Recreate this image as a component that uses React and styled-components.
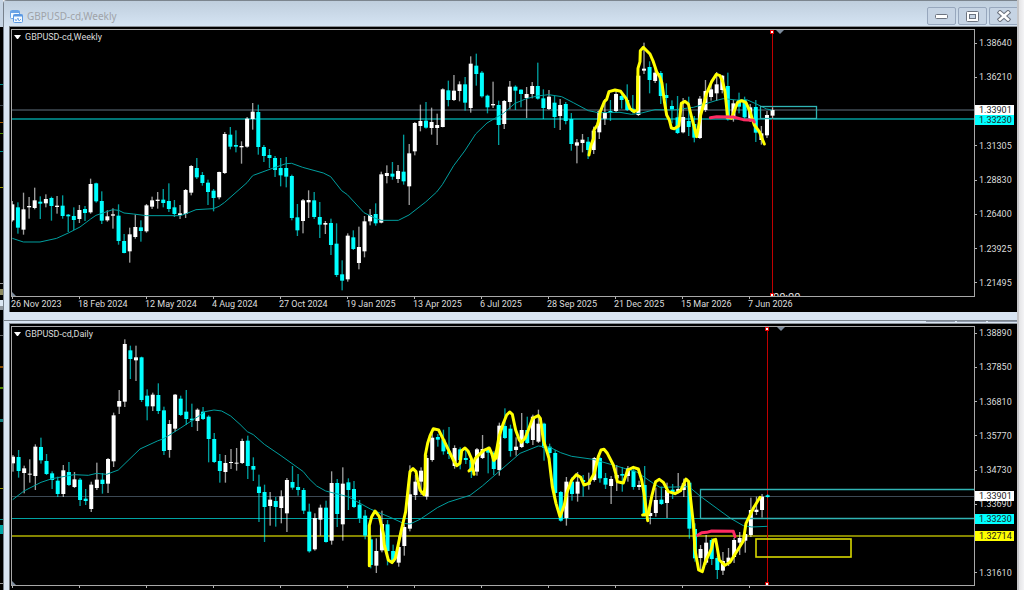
import React from 'react';
import styled, {createGlobalStyle} from 'styled-components';

const GlobalStyle = createGlobalStyle`
  * {
    box-sizing: border-box;
  }
  body {
    margin: 0;
    overflow: hidden;
    background: #ececee;
  }
`;

const chartFont = 'Roboto, "Liberation Sans", sans-serif';

const Workspace = styled.main`
  display: grid;
  grid-template-columns: 3px 1fr 7px;
  height: 100vh;
  overflow: hidden;
  font-family: ${chartFont};
  font-size: 9px;
  line-height: 10px;
`;

const Rail = styled.svg`
  display: block;
  width: 3px;
  height: 590px;
  background: #000;
`;

const Gutter = styled.div`
  border-left: 2px solid #c6c6c8;
  background: linear-gradient(90deg, #e4e4e6, #f4f4f6);
`;

const Windows = styled.div`
  min-width: 0;
`;

const Window = styled.section`
  padding: 0 0 ${({$last}) => ($last ? 0 : 8)}px 5px;
  border-top: 1px solid #7c858e;
  border-left: 1px solid #77818c;
  border-top-left-radius: ${({$last}) => ($last ? 0 : 4)}px;
  background: #d9e5f2;
`;

const TitleBar = styled.header`
  display: flex;
  align-items: center;
  justify-content: space-between;
  height: 25px;
  margin-left: -5px;
  padding: 5px 0 0 6px;
  background: linear-gradient(#bfcedd, #d5e4f3);
`;

const Caption = styled.h1`
  display: flex;
  align-items: center;
  gap: 4px;
  margin: 0;
  color: #9fa3a8;
  font: 400 10px/16px "Noto Sans", "Open Sans", sans-serif;
`;

const Controls = styled.div`
  display: flex;
  gap: 2px;
`;

const ControlButton = styled.button`
  display: flex;
  align-items: center;
  justify-content: center;
  width: ${({$edge}) => ($edge ? 28 : 29)}px;
  height: 18px;
  padding: 0;
  border: 1px solid #97a7bd;
  border-right-width: ${({$edge}) => ($edge ? 0 : 1)}px;
  border-radius: ${({$edge}) => ($edge ? '2px 0 0 2px' : '2px')};
  background: #c6d4e4;
`;

const HiddenBar = styled.div`
  display: flex;
  justify-content: flex-end;
  gap: 2px;
  height: 2px;
`;

const BarEdge = styled.span`
  width: 29px;
  height: 1px;
  background: #8d97a8;
`;

const ChartBox = styled.div`
  display: grid;
  grid-template-columns: 1fr 42px;
  padding: 2px 0 0 1px;
  border-top: 1px solid #8b9197;
  border-left: 1px solid #70767c;
  background: #000;
  color: #dcdcdc;
`;

const Plot = styled.div`
  position: relative;
  min-width: 0;
  height: ${({$height}) => $height + 2}px;
  border: 1px solid #a8a8a8;
`;

const Legend = styled.h2`
  display: flex;
  align-items: center;
  gap: 4px;
  position: absolute;
  top: 2px;
  left: 2px;
  margin: 0;
  font-size: 9px;
  font-weight: 400;
`;

const Canvas = styled.svg`
  display: block;
  width: 100%;
  height: 100%;
  overflow: hidden;
`;

const PriceAxis = styled.div`
  position: relative;
`;

const PriceList = styled.ol`
  display: flex;
  flex-direction: column;
  justify-content: space-between;
  height: 250px;
  margin: 0;
  padding: ${({$top}) => $top}px 0 0;
  box-sizing: content-box;
  list-style: none;
`;

const Price = styled.li`
  display: flex;
  align-items: center;
  gap: 2px;
  height: 10px;
  &::before {
    content: '';
    width: 2px;
    height: 1px;
    background: #b4b4b4;
  }
`;

const PriceTag = styled.span`
  position: absolute;
  top: ${({$top}) => $top}px;
  left: 0;
  width: 39px;
  height: 10px;
  padding-left: 4px;
  background: ${({$color}) => $color};
  color: #202020;
`;

const TimeAxis = styled.ol`
  display: flex;
  grid-column: 1 / -1;
  height: 15px;
  margin: 0;
  padding: 0;
  list-style: none;
  overflow: hidden;
`;

const TimeLabel = styled.li`
  flex: 0 0 67px;
  white-space: nowrap;
  &::before {
    content: '';
    display: block;
    width: 1px;
    height: 2px;
    margin-left: 1px;
    background: #b4b4b4;
  }
`;

// One candle: [rising, high, bodyTop, bodyBottom, low].
// Drawing data is kept in thirds of a pixel, y measured from the workspace top.
const STEP = 16.77;

const weekly = [
    [1, 603, 613, 661, 665], [0, 607, 622, 683, 701], [1, 578, 628, 689, 704], [1, 591, 618, 622, 656],
    [1, 563, 601, 624, 628], [0, 589, 605, 611, 657], [1, 583, 597, 610, 622], [0, 590, 594, 618, 662],
    [1, 588, 617, 621, 641], [0, 586, 617, 648, 656], [0, 642, 644, 649, 696], [0, 622, 648, 660, 690],
    [1, 615, 630, 657, 669], [0, 618, 627, 639, 663], [1, 536, 552, 637, 641], [0, 548, 550, 604, 608],
    [0, 574, 603, 662, 672], [1, 631, 649, 661, 665], [1, 625, 643, 647, 686], [0, 613, 647, 723, 734],
    [0, 702, 723, 759, 760], [1, 683, 703, 754, 788], [1, 644, 681, 711, 716], [0, 661, 682, 693, 725],
    [1, 612, 616, 694, 698], [1, 590, 601, 620, 627], [1, 576, 599, 603, 626], [0, 567, 599, 609, 622],
    [0, 550, 603, 627, 636], [0, 600, 622, 642, 651], [1, 615, 640, 645, 657], [1, 567, 570, 642, 654],
    [1, 495, 498, 578, 586], [0, 474, 504, 532, 537], [0, 516, 525, 549, 557], [0, 539, 548, 576, 615],
    [0, 567, 572, 594, 634], [1, 515, 516, 592, 598], [1, 396, 402, 519, 522], [0, 381, 404, 440, 448],
    [0, 391, 435, 440, 457], [1, 424, 438, 442, 491], [1, 351, 356, 440, 443], [1, 309, 335, 357, 389],
    [0, 314, 336, 441, 464], [0, 435, 441, 468, 486], [0, 447, 465, 474, 504], [0, 468, 474, 510, 531],
    [0, 474, 504, 526, 559], [0, 471, 504, 530, 562], [0, 524, 528, 654, 661], [0, 612, 652, 691, 708],
    [1, 597, 601, 663, 700], [1, 571, 600, 607, 654], [0, 576, 601, 651, 657], [0, 606, 651, 674, 714],
    [1, 663, 669, 674, 702], [0, 656, 669, 735, 765], [0, 670, 731, 825, 831], [0, 781, 823, 842, 871],
    [1, 700, 707, 838, 845], [0, 691, 712, 747, 750], [1, 680, 741, 789, 808], [1, 648, 664, 754, 772],
    [1, 627, 645, 664, 676], [0, 610, 642, 670, 677], [1, 515, 523, 668, 670], [1, 496, 519, 528, 550],
    [0, 486, 521, 530, 539], [1, 495, 513, 537, 549], [0, 404, 515, 544, 554], [1, 432, 460, 559, 615],
    [1, 366, 369, 454, 466], [1, 314, 363, 378, 394], [0, 306, 362, 383, 386], [1, 323, 366, 384, 404],
    [1, 341, 375, 384, 435], [1, 265, 268, 381, 382], [0, 242, 271, 300, 319], [1, 225, 272, 300, 303],
    [1, 244, 253, 273, 304], [0, 231, 253, 308, 332], [1, 169, 191, 324, 338], [0, 161, 197, 222, 257],
    [0, 213, 218, 289, 293], [0, 284, 287, 322, 340], [1, 245, 312, 316, 324], [0, 302, 315, 375, 435],
    [1, 300, 303, 372, 387], [1, 243, 260, 306, 328], [0, 256, 260, 272, 330], [0, 268, 269, 282, 322],
    [1, 261, 282, 294, 354], [1, 246, 258, 282, 295], [0, 188, 258, 296, 299], [0, 268, 295, 324, 357],
    [1, 270, 290, 327, 330], [0, 288, 308, 351, 384], [1, 297, 315, 348, 390], [0, 306, 312, 363, 373],
    [0, 339, 357, 432, 452], [1, 417, 427, 437, 490], [1, 402, 419, 429, 457], [0, 411, 425, 450, 477],
    [1, 380, 392, 450, 462], [1, 330, 334, 397, 417], [1, 297, 337, 356, 375], [0, 300, 333, 338, 363],
    [1, 270, 282, 333, 337], [0, 276, 288, 300, 326], [0, 253, 300, 330, 333], [0, 285, 326, 336, 340],
    [1, 220, 227, 345, 348], [1, 128, 206, 212, 222], [0, 184, 201, 240, 280], [1, 200, 218, 243, 249],
    [0, 213, 219, 288, 312], [0, 250, 285, 294, 330], [0, 301, 318, 329, 370], [0, 288, 352, 399, 402],
    [1, 294, 351, 397, 400], [0, 290, 363, 381, 408], [0, 348, 372, 413, 427], [1, 288, 296, 414, 417],
    [1, 240, 273, 330, 336], [1, 255, 268, 291, 302], [1, 216, 253, 280, 303], [1, 225, 227, 270, 280],
    [0, 218, 258, 358, 362], [1, 300, 310, 350, 365], [0, 278, 300, 320, 340], [0, 290, 300, 352, 356],
    [1, 312, 322, 355, 366], [0, 300, 321, 398, 426], [1, 378, 400, 420, 434], [1, 333, 345, 406, 414],
    [1, 322, 330, 347, 354],
];

const daily = [
    [1, 1365, 1370, 1390, 1415], [0, 1350, 1371, 1413, 1433], [1, 1397, 1405, 1419, 1480], [1, 1378, 1421, 1424, 1448],
    [1, 1333, 1340, 1428, 1470], [0, 1313, 1341, 1381, 1391], [0, 1362, 1383, 1422, 1425], [0, 1414, 1420, 1440, 1467],
    [0, 1430, 1442, 1482, 1491], [1, 1395, 1411, 1482, 1491], [0, 1386, 1416, 1455, 1458], [1, 1416, 1438, 1461, 1464],
    [0, 1434, 1439, 1500, 1518], [0, 1467, 1496, 1503, 1515], [1, 1445, 1454, 1527, 1536], [1, 1388, 1439, 1464, 1470],
    [0, 1419, 1439, 1452, 1481], [1, 1374, 1377, 1451, 1479], [1, 1238, 1246, 1384, 1401], [1, 1170, 1203, 1220, 1242],
    [1, 1018, 1032, 1205, 1221], [0, 1037, 1051, 1077, 1137], [1, 1037, 1072, 1081, 1143], [0, 1070, 1072, 1200, 1206],
    [0, 1168, 1187, 1219, 1261], [1, 1178, 1184, 1219, 1233], [0, 1150, 1185, 1233, 1242], [0, 1220, 1231, 1353, 1365],
    [1, 1260, 1272, 1350, 1373], [1, 1182, 1184, 1286, 1295], [0, 1187, 1196, 1245, 1248], [0, 1170, 1235, 1257, 1275],
    [0, 1211, 1256, 1261, 1281], [1, 1225, 1229, 1263, 1293], [0, 1221, 1235, 1257, 1260], [0, 1246, 1250, 1317, 1387],
    [0, 1299, 1317, 1386, 1389], [0, 1362, 1383, 1413, 1448], [1, 1365, 1389, 1416, 1448], [1, 1347, 1386, 1389, 1407],
    [1, 1344, 1388, 1391, 1412], [1, 1316, 1323, 1389, 1392], [0, 1307, 1322, 1398, 1437], [0, 1372, 1398, 1409, 1443],
    [0, 1424, 1460, 1479, 1566], [0, 1454, 1476, 1521, 1626], [1, 1476, 1499, 1518, 1577], [0, 1491, 1503, 1521, 1580],
    [1, 1471, 1489, 1524, 1570], [1, 1434, 1440, 1540, 1596], [0, 1398, 1446, 1463, 1469], [0, 1422, 1461, 1470, 1487],
    [0, 1464, 1470, 1532, 1542], [0, 1511, 1535, 1654, 1658], [1, 1540, 1554, 1648, 1652], [1, 1514, 1523, 1559, 1607],
    [0, 1502, 1523, 1626, 1628], [1, 1414, 1449, 1622, 1634], [0, 1437, 1449, 1542, 1581], [1, 1402, 1451, 1573, 1622],
    [0, 1435, 1447, 1470, 1530], [0, 1443, 1467, 1521, 1524], [0, 1500, 1514, 1554, 1569], [0, 1530, 1547, 1607, 1618],
    [0, 1607, 1618, 1695, 1705], [1, 1615, 1653, 1697, 1719], [1, 1532, 1572, 1651, 1657], [0, 1560, 1573, 1653, 1696],
    [0, 1634, 1653, 1685, 1688], [1, 1610, 1641, 1688, 1700], [1, 1573, 1581, 1638, 1667], [1, 1396, 1483, 1586, 1594],
    [1, 1425, 1445, 1485, 1500], [1, 1402, 1412, 1445, 1485], [1, 1365, 1374, 1490, 1499], [1, 1300, 1313, 1380, 1385],
    [0, 1302, 1311, 1319, 1340], [0, 1289, 1318, 1354, 1364], [0, 1281, 1354, 1362, 1377], [1, 1336, 1344, 1398, 1406],
    [0, 1342, 1348, 1380, 1408], [0, 1347, 1374, 1380, 1392], [0, 1374, 1380, 1415, 1434], [1, 1344, 1348, 1415, 1427],
    [1, 1305, 1347, 1374, 1377], [0, 1340, 1347, 1358, 1420], [0, 1354, 1359, 1407, 1425], [1, 1268, 1277, 1410, 1427],
    [0, 1225, 1278, 1314, 1317], [0, 1274, 1286, 1353, 1370], [1, 1312, 1340, 1350, 1367], [1, 1239, 1290, 1341, 1344],
    [0, 1250, 1290, 1329, 1332], [1, 1244, 1250, 1320, 1335], [1, 1229, 1271, 1325, 1329], [0, 1268, 1271, 1343, 1382],
    [0, 1331, 1340, 1359, 1380], [0, 1350, 1359, 1479, 1488], [0, 1473, 1476, 1562, 1565], [1, 1431, 1445, 1554, 1577],
    [0, 1431, 1445, 1482, 1502], [1, 1416, 1445, 1481, 1505], [0, 1425, 1440, 1446, 1490], [1, 1418, 1448, 1454, 1469],
    [1, 1371, 1374, 1440, 1445], [0, 1370, 1374, 1435, 1448], [0, 1419, 1434, 1454, 1467], [1, 1428, 1437, 1458, 1512],
    [1, 1395, 1425, 1435, 1473], [0, 1401, 1422, 1427, 1475], [1, 1398, 1405, 1428, 1445], [0, 1407, 1412, 1461, 1469],
    [1, 1442, 1455, 1461, 1470], [0, 1398, 1455, 1547, 1550], [1, 1500, 1539, 1548, 1573], [1, 1463, 1500, 1539, 1550],
    [0, 1460, 1499, 1512, 1515], [1, 1448, 1470, 1509, 1554], [0, 1452, 1469, 1476, 1497], [1, 1419, 1467, 1473, 1480],
    [1, 1436, 1450, 1470, 1491], [0, 1443, 1448, 1586, 1616], [0, 1570, 1587, 1675, 1685], [1, 1635, 1647, 1674, 1713],
    [1, 1605, 1628, 1688, 1694], [0, 1615, 1620, 1677, 1695], [0, 1668, 1674, 1710, 1737], [1, 1656, 1683, 1712, 1725],
    [1, 1644, 1673, 1687, 1698], [1, 1614, 1620, 1671, 1689], [1, 1596, 1614, 1628, 1665], [1, 1575, 1602, 1622, 1658],
    [1, 1493, 1530, 1605, 1611], [1, 1490, 1529, 1536, 1545], [1, 1482, 1490, 1530, 1553], [0, 1483, 1486, 1491, 1493],
];

const weeklyAverage = '37,715 70,726 120,726 170,715 205,699 240,681 272,657 288,646 338,629 356,631 372,639 400,642 439,647 540,647 556,642 588,629 640,626 657,619 674,607 741,548 757,528 760,526 820,504 858,491 875,490 908,502 970,519 992,530 1025,572 1042,584 1092,638 1126,655 1144,661 1195,661 1227,645 1277,606 1310,576 1327,554 1361,497 1394,453 1427,402 1461,369 1510,340 1545,310 1579,296 1612,288 1646,284 1685,290 1720,308 1765,332 1795,338 1860,337 1895,343 1925,339 1965,329 2020,330 2080,322 2115,312 2150,301 2170,296 2210,300 2240,299 2265,310 2300,327 2316,330';
const dailyAverage = '38,1499 72,1473 123,1447 156,1436 223,1424 265,1426 290,1420 320,1423 355,1410 390,1376 420,1347 472,1323 491,1316 542,1284 592,1251 615,1235 642,1230 665,1233 692,1248 720,1273 742,1295 760,1304 793,1333 843,1367 910,1415 927,1436 950,1458 977,1473 1044,1490 1111,1527 1178,1555 1210,1570 1230,1572 1260,1558 1312,1523 1346,1506 1410,1486 1447,1458 1500,1412 1560,1360 1615,1338 1650,1342 1682,1358 1715,1369 1780,1378 1849,1398 1910,1416 1960,1450 1980,1462 2067,1460 2100,1488 2190,1554 2230,1577 2255,1581 2302,1579';

// freehand marks, each with its own origin
const weeklyInk = [
    {x: 1380, y: 90, points: '387,375 393,345 401,325 402,300 412,285 418,265 420,247 433,215 440,208 447,185 465,180 482,184 498,205 510,236 522,245 532,240 534,115 540,95 541,62 550,52 570,72 580,95 590,125 600,142 606,160 614,220 620,255 628,270 634,294 643,296 657,287 664,220 675,214 685,222 697,270 710,320 722,255 740,190 755,155 769,133 780,137 788,155 795,185 803,262'},
    {x: 2100, y: 0, points: '83,352 95,355 102,335 112,308 125,302 138,308 150,335 163,375 178,395 193,432'},
    {x: 2100, y: 0, color: '#ff2b62', points: '31,353 50,350 100,351 130,359 160,361 163,366'},
];
const dailyInk = [
    {x: 720, y: 1140, points: '388,557 388,437 395,410 405,393 418,410 430,460 433,495 445,540 456,548 466,535 483,455 497,395 505,320 510,275 519,266 528,275 533,300 540,330 552,344 555,320 556,225 563,190 570,168 580,146 596,150 616,190 640,240 650,257 660,250 665,212 675,204 684,213 694,235 702,283'},
    {x: 720, y: 1140, points: '687,273 696,265 700,250 706,235 730,212 748,204 755,220 761,241 770,232 775,195'},
    {x: 1410, y: 1170, points: '71,210 80,180 87,140 100,100 110,75 119,66 127,73 137,120 148,150 154,157 165,145 175,120 188,85 205,77 211,85 220,150 237,205 247,290 258,340 270,380 283,345 290,310 305,270 319,254 332,262 342,285 355,281 373,250 385,200 393,180 402,178 412,190 430,225 437,250 442,275 460,279 473,240 490,232 505,237 515,270 522,310 533,392'},
    {x: 1410, y: 1170, points: '518,375 535,372 545,320 550,300 557,275 568,268 580,277 595,305 615,311 632,302 648,267 656,275 670,400 675,480 686,540 697,545 705,517 725,475 730,450 737,448 742,475 748,510 765,526 780,517 820,453 828,400 850,355 870,322'},
    {x: 1980, y: 1320, color: '#ff2b62', points: '113,286 125,278 140,277 155,273 220,274 225,290'},
];

const charts = {
    weekly: {
        title: 'GBPUSD-cd,Weekly',
        top: 30,
        height: 266,
        start: 37,
        candles: weekly,
        average: weeklyAverage,
        ink: weeklyInk,
        levels: [{y: 79, color: '#30383f', thick: 2}, {y: 88, color: '#007474', thick: 2}],
        cursor: 760,
        marker: 768,
        pricesTop: 9,
        prices: ['1.38640', '1.36210', '', '1.31305', '1.28830', '1.26400', '1.23925', '1.21495'],
        tags: [['1.33901', '#fff', 76], ['1.33230', '#0ff', 86]],
        times: ['26 Nov 2023', '18 Feb 2024', '12 May 2024', '4 Aug 2024', '27 Oct 2024', '19 Jan 2025',
            '13 Apr 2025', '6 Jul 2025', '28 Sep 2025', '21 Dec 2025', '15 Mar 2026', '7 Jun 2026'],
    },
    daily: {
        title: 'GBPUSD-cd,Daily',
        top: 327,
        height: 258,
        start: 39,
        candles: daily,
        average: dailyAverage,
        ink: dailyInk,
        levels: [{y: 169, color: '#3c4954', thick: 1}, {y: 191, color: '#00a3a3', thick: 1}, {y: 208, color: '#858500', thick: 2}],
        cursor: 755,
        marker: 769,
        pricesTop: 2,
        prices: ['1.38890', '1.37850', '1.36810', '1.35770', '1.34730', '1.33690', '', '1.31610'],
        tags: [['1.33901', '#fff', 165], ['1.33230', '#0ff', 188], ['1.32714', '#ff0', 205]],
        times: ['', '', '', '', '', '', '', '', '', '', '', ''],
    },
};

const Candle = ({x, data: [rising, high, top, bottom, low]}) => (
    <g fill={rising ? '#fff' : '#0ff'}>
        <rect x={x - 2} y={high} width="4" height={low - high} opacity="0.62"/>
        <rect x={x - 6} y={top} width="12" height={Math.max(bottom - top, 3)}/>
    </g>
);

const Handle = ({x, y}) => (
    <g>
        <rect x={x - 2} y={y - 2} width="4" height="4" fill="#e00000"/>
        <rect x={x - 1} y={y - 1} width="2" height="2" fill="#fff"/>
    </g>
);

const Chart = ({chart, children}) => (
    <ChartBox>
        <Plot $height={chart.height}>
            <Canvas role="img" aria-label={`${chart.title} candlestick chart`}>
                {chart.levels.map(({y, color, thick}) => (
                    <rect key={y} x="0" y={y} width="100%" height={thick} fill={color}/>
                ))}
                <rect x={chart.cursor} y="0" width="1" height={chart.height} fill="#c00000"/>
                <g transform={`translate(-12 ${-chart.top}) scale(0.33333)`}>
                    {chart.candles.map((data, i) => (
                        <Candle key={i} x={chart.start + i * STEP} data={data}/>
                    ))}
                    <polyline points={chart.average} fill="none" stroke="#00a0a0" strokeWidth="3"/>
                </g>
                {children}
                <g transform={`translate(-12 ${-chart.top}) scale(0.33333)`}>
                    {chart.ink.map(({x, y, points, color = '#ff0'}) => (
                        <polyline
                            key={points}
                            transform={`translate(${x} ${y})`}
                            points={points}
                            fill="none"
                            stroke={color}
                            strokeWidth="9"
                            strokeLinecap="round"
                            strokeLinejoin="round"
                        />
                    ))}
                </g>
                <Handle x={chart.cursor} y={2}/>
                <Handle x={chart.cursor} y={chart.height - 1}/>
                <path d={`M${chart.marker - 4} 0h8l-4 4z`} fill="#7c8b9c"/>
                <path d={`M0 ${chart.height - 4}l4 4h-4z`} fill="#7c8b9c"/>
            </Canvas>
            <Legend>
                <svg width="7" height="4" aria-hidden="true"><path d="M0 0h7l-3 4h-1z" fill="#fff"/></svg>
                {chart.title}
            </Legend>
        </Plot>
        <PriceAxis>
            <PriceList $top={chart.pricesTop}>
                {chart.prices.map((price, i) => <Price key={i}>{price}</Price>)}
            </PriceList>
            {chart.tags.map(([price, color, top]) => (
                <PriceTag key={price} $color={color} $top={top}>{price}</PriceTag>
            ))}
        </PriceAxis>
        <TimeAxis>
            {chart.times.map((time, i) => <TimeLabel key={i}>{time}</TimeLabel>)}
        </TimeAxis>
    </ChartBox>
);

const ChartIcon = () => (
    <svg width="13" height="13" viewBox="0 0 13 13" aria-hidden="true">
        <rect x="0.5" y="0.5" width="9" height="8" rx="1" fill="#f4faff" stroke="#6ba4e6"/>
        <path d="M0.5 2h9" stroke="#6ba4e6" strokeWidth="2"/>
        <rect x="3.5" y="4.5" width="9" height="8" rx="1" fill="#f4faff" stroke="#5a98e2"/>
        <path d="M3.5 5.5h9" stroke="#5a98e2" strokeWidth="2"/>
        <path d="M5 9l1 2 2-3 1 3 2-2" fill="none" stroke="#78abe8"/>
    </svg>
);

const railMarks = [
    [0, 27, '#c5d4e4'], [84, 1, '#008a8a'], [105, 1, '#39434c'], [122, 1, '#a85b00'], [133, 1, '#4f8c00'],
    [151, 1, '#008a8a'], [187, 1, '#9a9a00'], [283, 1, '#999'], [289, 6, '#8d8b62'], [300, 6, '#dce7f3'],
    [306, 4, '#8f969e'], [335, 1, '#666'], [366, 2, '#8c4b00'], [387, 2, '#4f8c00'], [419, 3, '#147e80'],
    [488, 1, '#9a9a00'], [519, 1, '#008a8a'], [525, 9, '#00a6a6'], [583, 1, '#999'],
];

export default () => (
    <Workspace>
        <GlobalStyle/>
        <Rail aria-hidden="true">
            {railMarks.map(([y, height, color]) => (
                <rect key={y} x="0" y={y} width="3" height={height} fill={color}/>
            ))}
        </Rail>
        <Windows>
            <Window>
                <TitleBar>
                    <Caption><ChartIcon/>GBPUSD-cd,Weekly</Caption>
                    <Controls>
                        <ControlButton aria-label="Minimize">
                            <svg width="13" height="5"><rect x="0.5" y="0.5" width="12" height="4" rx="1" fill="#fff" stroke="#6d7480"/></svg>
                        </ControlButton>
                        <ControlButton aria-label="Maximize">
                            <svg width="13" height="11">
                                <rect x="0.5" y="0.5" width="12" height="10" rx="1" fill="#fff" stroke="#6d7480"/>
                                <rect x="3.5" y="3.5" width="6" height="4" fill="#c6d4e4" stroke="#6d7480"/>
                            </svg>
                        </ControlButton>
                        <ControlButton aria-label="Close" $edge>
                            <svg width="14" height="12" viewBox="0 0 14 12">
                                <path d="M3 2.500l8 7M11 2.500l-8 7" stroke="#6d7480" strokeWidth="4.600" strokeLinecap="square"/>
                                <path d="M3 2.500l8 7M11 2.500l-8 7" stroke="#fff" strokeWidth="2.600" strokeLinecap="square"/>
                            </svg>
                        </ControlButton>
                    </Controls>
                </TitleBar>
                <Chart chart={charts.weekly}>
                    <rect x="748.5" y="76.5" width="56" height="12" fill="none" stroke="#30b4b4" strokeWidth="1.300"/>
                    <text x="761" y="271" fill="#e0e0e0" fontSize="11">00:00</text>
                </Chart>
            </Window>
            <Window $last>
                <HiddenBar><BarEdge/><BarEdge/><BarEdge/></HiddenBar>
                <Chart chart={charts.daily}>
                    <path d="M3000 162.500H688.500V191.500H3000" fill="none" stroke="#30b4b4" strokeWidth="1.300"/>
                    <rect x="744" y="212" width="95" height="18" fill="none" stroke="#d8d800" strokeWidth="1.600"/>
                </Chart>
            </Window>
        </Windows>
        <Gutter/>
    </Workspace>
);
